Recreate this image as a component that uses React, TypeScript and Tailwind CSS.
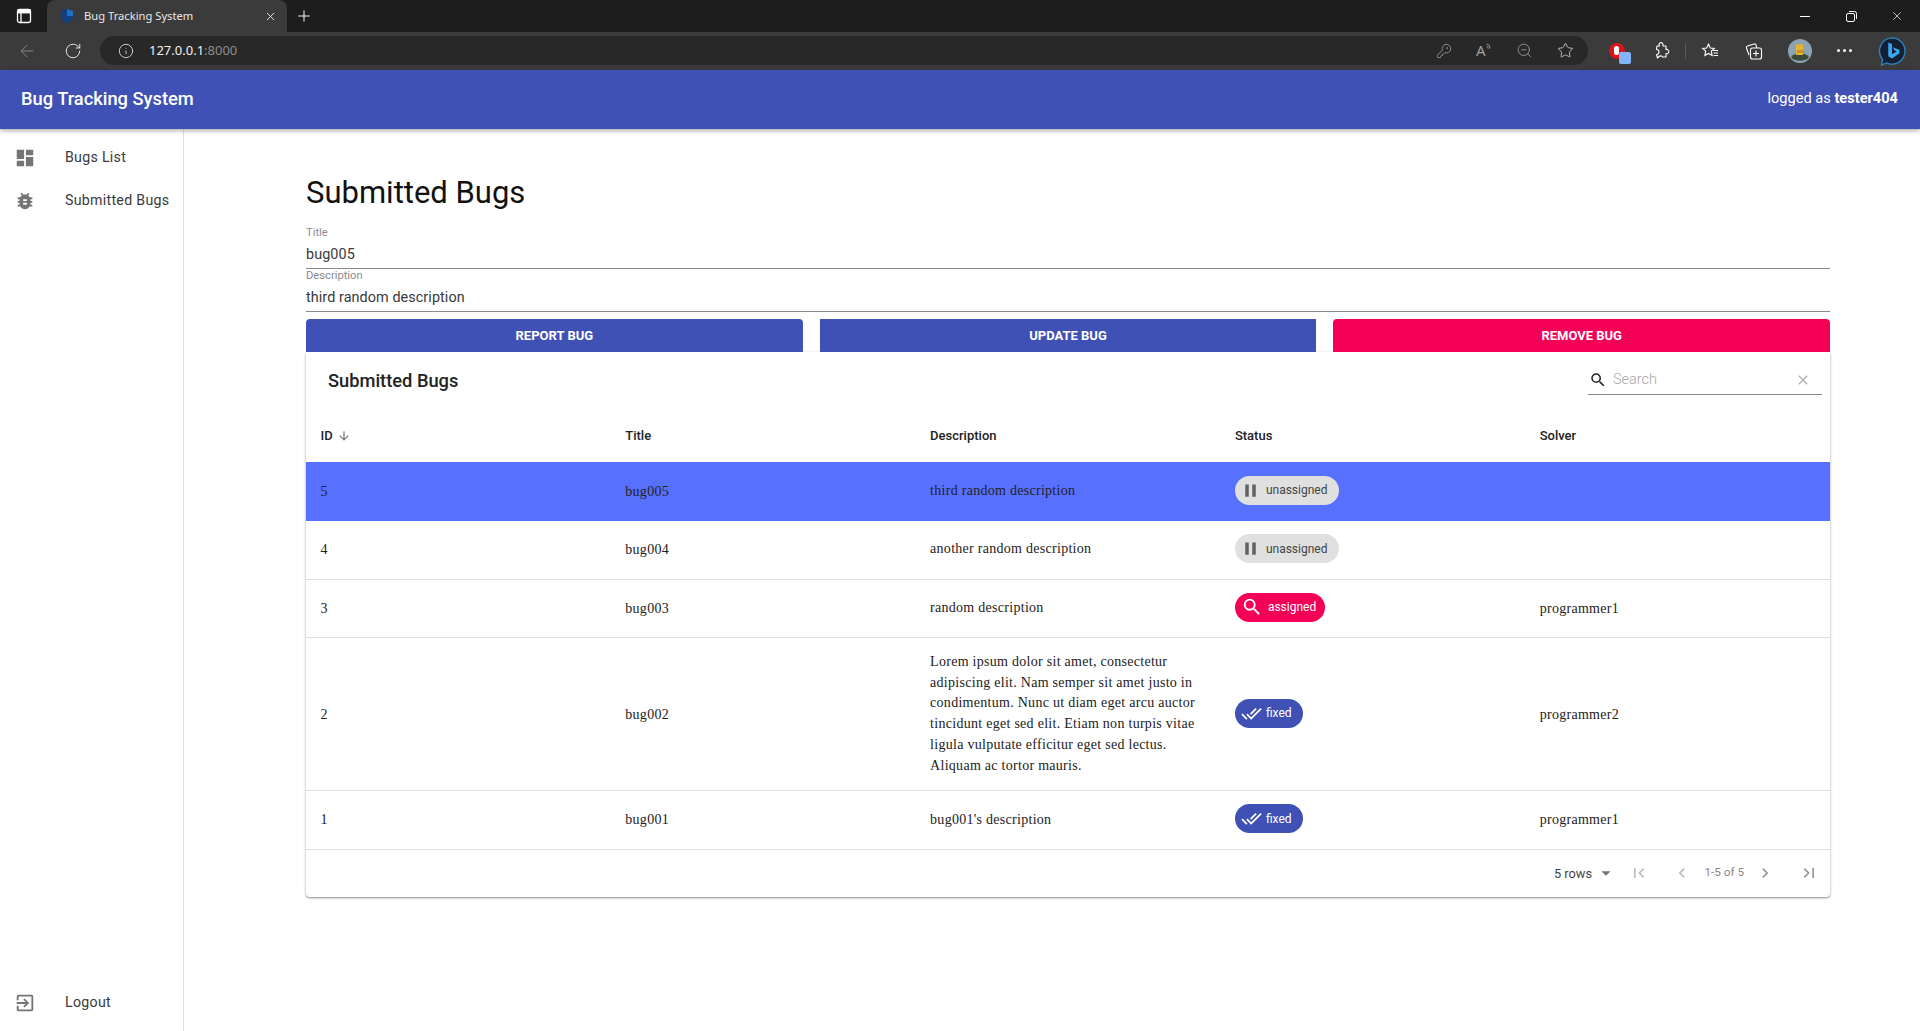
import { ArrowLeft, Info, KeyRound, Plus, RotateCw, Star, X, ZoomOut } from "lucide-react";
import {
  MdArrowDownward,
  MdArrowDropDown,
  MdBugReport,
  MdChevronLeft,
  MdChevronRight,
  MdClear,
  MdDashboard,
  MdDoneAll,
  MdExitToApp,
  MdFirstPage,
  MdLastPage,
  MdPause,
  MdSearch,
} from "react-icons/md";

const bugs = [
  { id: 5, title: "bug005", description: "third random description", status: "unassigned", solver: "", selected: true },
  { id: 4, title: "bug004", description: "another random description", status: "unassigned", solver: "" },
  { id: 3, title: "bug003", description: "random description", status: "assigned", solver: "programmer1" },
  {
    id: 2,
    title: "bug002",
    description:
      "Lorem ipsum dolor sit amet, consectetur adipiscing elit. Nam semper sit amet justo in condimentum. Nunc ut diam eget arcu auctor tincidunt eget sed elit. Etiam non turpis vitae ligula vulputate efficitur eget sed lectus. Aliquam ac tortor mauris.",
    status: "fixed",
    solver: "programmer2",
  },
  { id: 1, title: "bug001", description: "bug001's description", status: "fixed", solver: "programmer1" },
];

function StatusChip({ status }: { status: string }) {
  if (status === "assigned") {
    return (
      <span className="inline-flex h-[29px] w-[90px] items-center rounded-full bg-[#f50057] pl-1.5 text-[12px] text-white">
        <MdSearch className="mr-[5px] size-[22px]" />
        assigned
      </span>
    );
  }
  if (status === "fixed") {
    return (
      <span className="inline-flex h-[29px] w-[68px] items-center rounded-full bg-[#3f51b5] pl-1.5 text-[12px] text-white">
        <MdDoneAll className="mr-[4px] size-[21px]" />
        fixed
      </span>
    );
  }
  return (
    <span className="inline-flex h-[29px] w-[104px] items-center rounded-full bg-[#e0e0e0] pl-[5px] text-[12px] text-[#444444]">
      <MdPause className="mr-[5px] size-[21px] text-[#616161]" />
      unassigned
    </span>
  );
}

function BrowserChrome() {
  return (
    <div className="font-['Noto_Sans',sans-serif]">
      <div className="flex h-8 items-end bg-[#1d1d1d] text-white">
        <div className="flex h-8 w-[47px] items-center justify-center">
          <svg width="16" height="16" viewBox="0 0 16 16" fill="none" stroke="white" strokeWidth="1.3">
            <rect x="1.5" y="1.5" width="13" height="13" rx="2" />
            <path d="M1.5 4.5h13M5 4.5v10" />
            <path d="M2 2h12v2.5H2z" fill="white" />
          </svg>
        </div>
        <div className="flex h-8 w-[240px] items-center rounded-t-lg bg-[#3b3b3b] pl-3 pr-[10px]">
          <svg width="16" height="16" viewBox="0 0 16 16">
            <path d="M8 1l6 2v5c0 3.5-2.5 6-6 7-3.500-1-6-3.500-6-7V3z" fill="#10407f" />
            <path d="M8 1l6 2v5H8z" fill="#1f6fc4" />
          </svg>
          <span className="ml-[9px] flex-1 text-[11.2px] text-[#e8e8e8]">Bug Tracking System</span>
          <X className="size-[13px]" strokeWidth={1.5} />
        </div>
        <div className="flex h-8 w-[34px] items-center justify-center">
          <Plus className="size-[18px]" strokeWidth={1.3} />
        </div>
        <div className="ml-auto flex h-8 items-center text-white">
          <div className="flex w-[46px] justify-center">
            <div className="h-px w-[10px] bg-white" />
          </div>
          <div className="flex w-[46px] justify-center">
            <svg width="11" height="11" viewBox="0 0 11 11" fill="none" stroke="white">
              <rect x="0.500" y="2.500" width="8" height="8" rx="1.500" />
              <path d="M3 0.500h5.500a2 2 0 0 1 2 2V8" />
            </svg>
          </div>
          <div className="flex w-[46px] justify-center">
            <X className="size-[14px]" strokeWidth={1.2} />
          </div>
        </div>
      </div>
      <div className="flex h-[38px] items-center bg-[#3b3b3b] pb-px">
        <div className="flex w-[54px] justify-center">
          <ArrowLeft className="size-[20px] text-[#858585]" strokeWidth={1.2} />
        </div>
        <div className="flex w-[37px] justify-center">
          <RotateCw className="size-[18px] text-[#e8e8e8]" strokeWidth={1.3} />
        </div>
        <div className="ml-[9px] flex h-[29px] w-[1488px] items-center rounded-full bg-[#282828] pl-[18px] pr-[14px]">
          <Info className="size-[16px] text-[#e0e0e0]" strokeWidth={1.3} />
          <span className="ml-[15px] text-[13px] text-[#f0f0f0]">
            127.0.0.1<span className="text-[#8b8b8b]">:8000</span>
          </span>
          <div className="ml-auto flex items-center gap-[24px] text-[#a0a0a0]">
            <KeyRound className="size-[16px]" strokeWidth={1.2} />
            <span className="flex w-[16px] items-start text-[15px] leading-none">
              A
              <svg width="7" height="9" viewBox="0 0 7 9" fill="none" stroke="currentColor" strokeWidth="1">
                <path d="M0.500 0.500a5 5 0 0 1 4 5M0.500 3a3 3 0 0 1 2 3" />
              </svg>
            </span>
            <ZoomOut className="size-[17px]" strokeWidth={1.2} />
            <Star className="size-[17px] text-[#d0d0d0]" strokeWidth={1.2} />
          </div>
        </div>
        <div className="ml-[19px] flex w-[20px] justify-center">
          <div className="relative size-[16px] rounded-full bg-[#d8141c]">
            <div className="absolute left-[5px] top-[3px] h-[9px] w-[5px] rounded-sm bg-white" />
            <div className="absolute left-[10px] top-[9px] size-[12px] rounded-[2px] bg-[#82b4f8]" />
          </div>
        </div>
        <div className="ml-[24px] flex w-[20px] justify-center">
          <svg width="18" height="18" viewBox="0 0 18 18" fill="none" stroke="white" strokeWidth="1.1" strokeLinejoin="round">
            <path d="M5 4h2.500a2 2 0 1 1 3.500-1.500V4h3v3.500a2.200 2.200 0 1 1 0 4.200V15h-3.500a2.200 2.200 0 0 0-3.500-.5L5.500 16 4.500 12.500a2.200 2.200 0 1 0 0-5z" />
          </svg>
        </div>
        <div className="ml-[14px] h-[16px] w-px bg-[#5a5a5a]" />
        <div className="ml-[14px] flex w-[20px] justify-center">
          <svg width="18" height="18" viewBox="0 0 18 18" fill="none" stroke="white" strokeWidth="1.1">
            <path d="M7.500 2l1.800 4 4 .4-3 2.800.8 4.300-3.600-2.100-3.600 2.100.8-4.300-3-2.800 4-.4z" />
            <path d="M12 8.500h5M12.500 11h4.500M12.500 13.500h4.500" />
          </svg>
        </div>
        <div className="ml-[24px] flex w-[20px] justify-center">
          <svg width="18" height="18" viewBox="0 0 18 18" fill="none" stroke="white" strokeWidth="1.1">
            <rect x="5.500" y="6" width="11" height="11" rx="2" />
            <path d="M11 8.500v6M8 11.500h6" />
            <path d="M4 13L1.500 6a1.500 1.500 0 0 1 1-2L9 2a1.500 1.500 0 0 1 2 1l.7 3" />
          </svg>
        </div>
        <div className="ml-[24px] flex w-[24px] justify-center">
          <svg width="24" height="24" viewBox="0 0 24 24">
            <circle cx="12" cy="12" r="12" fill="#8da3b5" />
            <path d="M3 18c4-5 14-5 18 0-3 5-15 5-18 0z" fill="#3c4a3a" />
            <path d="M8 5l1 1 1-1.500 1 1.500 1-1.500 1 1.500 1-1.500 1 1.500V16H8z" fill="#e3b52c" />
            <rect x="9" y="11" width="7" height="3" fill="#c98f2b" />
          </svg>
        </div>
        <div className="ml-[20px] flex w-[24px] justify-center gap-[3px]">
          <div className="size-[3px] rounded-full bg-white" />
          <div className="size-[3px] rounded-full bg-white" />
          <div className="size-[3px] rounded-full bg-white" />
        </div>
        <div className="ml-[21px] flex w-[30px] justify-center">
          <svg width="30" height="30" viewBox="0 0 32 32" fill="none">
            <path d="M16 2a14 14 0 1 1-6 26.700L5 31l1-6A14 14 0 0 1 16 2z" fill="#132033" stroke="#2f83b8" strokeWidth="1.500" />
            <path d="M12 7l4 1.500v11l5-3-2.500-1.200-1.500-3.300 7 2.800v3.500L16 24l-4-2.500z" fill="#38a7ee" />
          </svg>
        </div>
      </div>
    </div>
  );
}

function Sidebar() {
  const linkClass = "flex h-[43px] items-center text-[14.2px] tracking-[0.02em] text-[#3a3a3a]";
  const iconSlot = "flex w-[65px] justify-center pr-[15px] text-[#757575]";
  return (
    <aside className="flex w-[184px] shrink-0 flex-col border-r border-[#e0e0e0] pb-[7px] pt-[7px]">
      <a className={linkClass}>
        <span className={iconSlot}>
          <MdDashboard className="size-[22px]" />
        </span>
        Bugs List
      </a>
      <a className={linkClass}>
        <span className={iconSlot}>
          <MdBugReport className="size-[22px]" />
        </span>
        Submitted Bugs
      </a>
      <a className={`${linkClass} mt-auto`}>
        <span className={iconSlot}>
          <MdExitToApp className="size-[22px]" />
        </span>
        Logout
      </a>
    </aside>
  );
}

function BugTable() {
  return (
    <div className="rounded-b shadow-[0_1px_3px_rgba(0,0,0,0.35),0_1px_1px_rgba(0,0,0,0.14)]">
      <div className="flex h-[58px] items-center pl-[22px] pr-2">
        <h2 className="text-[18.3px] font-medium text-[#222222]">Submitted Bugs</h2>
        <div className="mb-[5px] ml-auto flex h-[32px] w-[234px] items-center border-b border-[#8a8a8a] pl-[1px] pr-[11px] pt-1">
          <MdSearch className="size-[18px] text-[#222222]" />
          <span className="ml-[6px] flex-1 text-[14.5px] font-light text-[#a8a8a8]">Search</span>
          <MdClear className="size-[16px] text-[#b0b0b0]" />
        </div>
      </div>
      <table className="w-full table-fixed border-collapse">
        <thead>
          <tr className="h-[52px] text-left text-[13px] font-medium text-[#222222]">
            <th className="px-[14.500px] font-medium">
              <span className="inline-flex items-center gap-1">
                ID <MdArrowDownward className="size-[14px] text-[#777777]" />
              </span>
            </th>
            <th className="px-[14.500px] font-medium">Title</th>
            <th className="px-[14.500px] font-medium">Description</th>
            <th className="px-[14.500px] font-medium">Status</th>
            <th className="px-[14.500px] font-medium">Solver</th>
          </tr>
        </thead>
        <tbody className="font-['Liberation_Serif',serif] text-[14px] tracking-[0.02em] text-[#222222]">
          {bugs.map((bug) => (
            <tr
              key={bug.id}
              className={bug.selected ? "h-[58.500px] bg-[#5870fe]" : "h-[58.500px] border-b border-[#e0e0e0]"}
            >
              <td className="px-[14.500px]">{bug.id}</td>
              <td className="px-[14.500px]">{bug.title}</td>
              <td className="px-[14.500px] py-[14px] leading-[20.700px]">{bug.description}</td>
              <td className="px-[14.500px] font-['Roboto',sans-serif] tracking-normal">
                <StatusChip status={bug.status} />
              </td>
              <td className="px-[14.500px]">{bug.solver}</td>
            </tr>
          ))}
        </tbody>
      </table>
      <div className="flex h-[47px] items-center justify-end text-[#bdbdbd]">
        <span className="text-[12.800px] text-[#444444]">5 rows</span>
        <MdArrowDropDown className="ml-[3px] size-[22px] text-[#757575]" />
        <MdFirstPage className="ml-[12px] size-[20px]" />
        <MdChevronLeft className="ml-[23px] size-[20px]" />
        <span className="ml-[12.500px] text-[11.700px] text-[#888888]">1-5 of 5</span>
        <MdChevronRight className="ml-[11px] size-[20px] text-[#999999]" />
        <MdLastPage className="ml-[24px] size-[20px] text-[#999999]" />
        <div className="w-[11px]" />
      </div>
    </div>
  );
}

function Field({ label, value }: { label: string; value: string }) {
  return (
    <div className="h-[43px] border-b border-[#8a8a8a]">
      <div className="h-[17px] text-[11.200px] leading-[13px] text-[#8a8a8a]">{label}</div>
      <div className="text-[14.400px] leading-[24px] tracking-[0.005em] text-[#3a3a3a]">{value}</div>
    </div>
  );
}

export default function App() {
  return (
    <div className="flex h-[1031px] flex-col overflow-hidden bg-white font-['Roboto',sans-serif]">
      <BrowserChrome />
      <header className="relative z-10 flex h-[59px] shrink-0 items-center justify-between bg-[#3f51b5] pb-px pl-[21px] pr-[22px] text-white shadow-[0_2px_4px_rgba(0,0,0,0.3)]">
        <h1 className="text-[18.300px] font-medium">Bug Tracking System</h1>
        <span className="text-[14.600px]">
          logged as <b className="font-bold">tester404</b>
        </span>
      </header>
      <div className="flex flex-1">
        <Sidebar />
        <main className="flex-1 pl-[122px] pr-[90px] pt-[41px]">
          <h1 className="h-[56px] text-[31px] leading-[46px] text-[#111111]">Submitted Bugs</h1>
          <Field label="Title" value="bug005" />
          <Field label="Description" value="third random description" />
          <div className="mt-[7px] flex gap-[17px]">
            <button className="h-[33px] flex-1 rounded-t bg-[#3f51b5] text-[13px] font-bold uppercase text-white">Report bug</button>
            <button className="h-[33px] flex-1 bg-[#3f51b5] text-[13px] font-bold uppercase text-white">Update bug</button>
            <button className="h-[33px] flex-1 rounded-t bg-[#f50057] text-[13px] font-bold uppercase text-white">Remove bug</button>
          </div>
          <BugTable />
        </main>
      </div>
    </div>
  );
}
